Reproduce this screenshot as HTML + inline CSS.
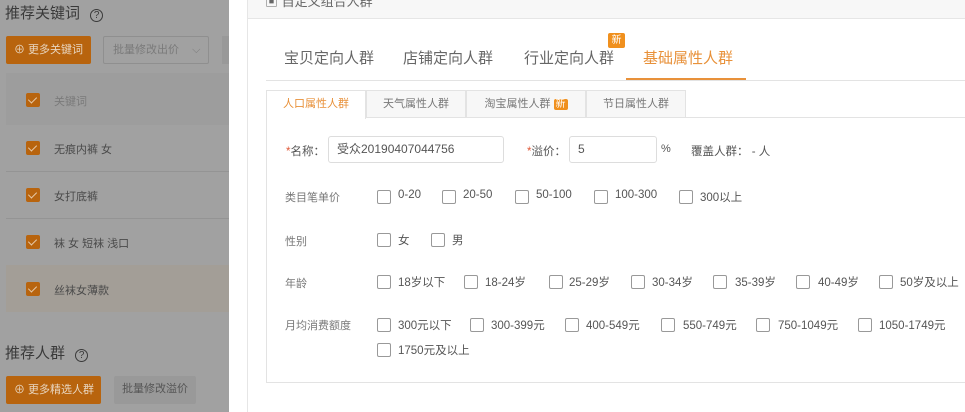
<!DOCTYPE html>
<html><head><meta charset="utf-8"><style>
*{margin:0;padding:0;box-sizing:border-box}
body{width:965px;height:412px;overflow:hidden;position:relative;background:#fff;font-family:"Liberation Sans","Noto Sans CJK SC",sans-serif;color:#555;font-size:12px}
.a{position:absolute;white-space:nowrap}
.l{left:0;top:0;width:229px;height:412px;background:#a1a1a1}
.ob{background:#b8640e;color:#e8d6c0;border-radius:2px;font-size:11px;line-height:28px;padding-left:8px}
.gb{background:#9c9c9c;border:1px solid #8f8f8f;color:#6a6a6a;border-radius:2px;font-size:11px}
.ck{width:14px;height:14px;border-radius:2px;background:#b8640e}
.ck:after{content:"";position:absolute;left:4px;top:2px;width:4px;height:7px;border:solid #e6c8a6;border-width:0 1.5px 1.5px 0;transform:rotate(45deg)}
.kt{font-size:11px;color:#4a4a4a}
.cb{width:14px;height:14px;border:1px solid #999;border-radius:2px;background:#fff}
.t{font-size:11.5px;color:#555}
.tab{top:90px;height:28px;border:1px solid #e3e3e3;background:#f7f7f7;font-size:11px;color:#777;text-align:center;line-height:26px}
</style></head><body>
<div class="a l"></div>
<div class="a" style="left:5px;top:2px;font-size:15px;color:#3a3a3a">推荐关键词 <span style="font-size:12px;border:1px solid #3a3a3a;border-radius:50%;display:inline-block;width:13px;height:13px;line-height:11px;text-align:center;font-size:10px;margin-left:6px">?</span></div>
<div class="a ob" style="left:6px;top:36px;width:85px">⊕ 更多关键词</div>
<div class="a gb" style="left:103px;top:36px;width:106px;height:28px;line-height:26px;padding-left:9px;background:#a1a1a1;color:#7a7a7a">批量修改出价 <span style="margin-left:10px">⌵</span></div>
<div class="a" style="left:222px;top:36px;width:7px;height:28px;background:#999"></div>
<div class="a" style="left:6px;top:73px;width:223px;height:52px;background:#9d9d9d"></div>
<div class="a" style="left:6px;top:171px;width:223px;height:1px;background:#949494"></div>
<div class="a" style="left:6px;top:218px;width:223px;height:1px;background:#949494"></div>
<div class="a" style="left:6px;top:265px;width:223px;height:47px;background:#a39e97"></div>
<div class="a ck" style="left:26px;top:93px"></div><div class="a kt" style="left:54px;top:93px;color:#7a7a7a">关键词</div>
<div class="a ck" style="left:26px;top:141px"></div><div class="a kt" style="left:54px;top:141px">无痕内裤 女</div>
<div class="a ck" style="left:26px;top:188px"></div><div class="a kt" style="left:54px;top:188px">女打底裤</div>
<div class="a ck" style="left:26px;top:235px"></div><div class="a kt" style="left:54px;top:235px">袜 女 短袜 浅口</div>
<div class="a ck" style="left:26px;top:282px"></div><div class="a kt" style="left:54px;top:282px">丝袜女薄款</div>
<div class="a" style="left:5px;top:342px;font-size:15px;color:#3a3a3a">推荐人群 <span style="border:1px solid #3a3a3a;border-radius:50%;display:inline-block;width:13px;height:13px;line-height:11px;text-align:center;font-size:10px;margin-left:6px">?</span></div>
<div class="a ob" style="left:6px;top:376px;width:95px">⊕ 更多精选人群</div>
<div class="a gb" style="left:114px;top:376px;width:82px;height:28px;line-height:26px;text-align:center;border:none;background:#999;color:#555">批量修改溢价</div>

<div class="a" style="left:229px;top:0;width:736px;height:412px;background:#fff"></div>
<div class="a" style="left:247px;top:0;width:718px;height:19px;background:#f7f7f7;border-bottom:1px solid #e6e6e6;border-left:1px solid #e6e6e6"></div>
<div class="a" style="left:247px;top:19px;width:1px;height:393px;background:#e6e6e6"></div>
<div class="a" style="left:265px;top:-9px;font-size:13px;color:#666">▣ 自定义组合人群</div>

<div class="a" style="left:266px;top:80px;width:699px;height:1px;background:#e3e3e3"></div>
<div class="a" style="left:626px;top:78px;width:120px;height:2px;background:#e8913a"></div>
<div class="a" style="left:284px;top:47px;font-size:15px;color:#666">宝贝定向人群</div>
<div class="a" style="left:403px;top:47px;font-size:15px;color:#666">店铺定向人群</div>
<div class="a" style="left:524px;top:47px;font-size:15px;color:#666">行业定向人群</div>
<div class="a" style="left:643px;top:47px;font-size:15px;color:#e8913a">基础属性人群</div>
<div class="a" style="left:608px;top:33px;width:17px;height:15px;background:#f0901e;border-radius:2px;color:#fff;font-size:10px;text-align:center;line-height:15px">新</div>

<div class="a" style="left:266px;top:117px;width:699px;height:266px;border:1px solid #e3e3e3;border-right:none"></div>
<div class="a tab" style="left:366px;width:100px">天气属性人群</div>
<div class="a tab" style="left:466px;width:120px">淘宝属性人群 <span style="background:#f0901e;color:#fff;padding:0 2px;border-radius:2px;font-size:10px">新</span></div>
<div class="a tab" style="left:586px;width:100px">节日属性人群</div>
<div class="a tab" style="left:266px;width:100px;background:#fff;color:#e8913a;height:29px;border-bottom:none">人口属性人群</div>

<div class="a t" style="left:286px;top:143px"><span style="color:#e05a3a">*</span>名称：</div>
<div class="a" style="left:328px;top:136px;width:176px;height:27px;border:1px solid #ddd;border-radius:3px;font-size:12px;line-height:25px;padding-left:8px;color:#555">受众20190407044756</div>
<div class="a t" style="left:527px;top:143px"><span style="color:#e05a3a">*</span>溢价：</div>
<div class="a" style="left:569px;top:136px;width:88px;height:27px;border:1px solid #ddd;border-radius:3px;line-height:25px;padding-left:8px">5</div>
<div class="a t" style="left:661px;top:143px;font-size:11px">%</div>
<div class="a t" style="left:691px;top:143px;color:#555">覆盖人群： -  人</div>

<div class="a t" style="left:285px;top:189px;font-size:11px;color:#777">类目笔单价</div>
<div class="a t" style="left:285px;top:233px;font-size:11px;color:#777">性别</div>
<div class="a t" style="left:285px;top:275px;font-size:11px;color:#777">年龄</div>
<div class="a t" style="left:285px;top:317px;font-size:11px;color:#777">月均消费额度</div>

<div class="a cb" style="left:377px;top:190px"></div><div class="a t" style="left:398px;top:189px">0-20</div>
<div class="a cb" style="left:442px;top:190px"></div><div class="a t" style="left:463px;top:189px">20-50</div>
<div class="a cb" style="left:515px;top:190px"></div><div class="a t" style="left:536px;top:189px">50-100</div>
<div class="a cb" style="left:594px;top:190px"></div><div class="a t" style="left:615px;top:189px">100-300</div>
<div class="a cb" style="left:679px;top:190px"></div><div class="a t" style="left:700px;top:189px">300以上</div>

<div class="a cb" style="left:377px;top:233px"></div><div class="a t" style="left:398px;top:232px">女</div>
<div class="a cb" style="left:431px;top:233px"></div><div class="a t" style="left:452px;top:232px">男</div>

<div class="a cb" style="left:377px;top:275px"></div><div class="a t" style="left:398px;top:274px">18岁以下</div>
<div class="a cb" style="left:464px;top:275px"></div><div class="a t" style="left:485px;top:274px">18-24岁</div>
<div class="a cb" style="left:549px;top:275px"></div><div class="a t" style="left:569px;top:274px">25-29岁</div>
<div class="a cb" style="left:631px;top:275px"></div><div class="a t" style="left:652px;top:274px">30-34岁</div>
<div class="a cb" style="left:713px;top:275px"></div><div class="a t" style="left:735px;top:274px">35-39岁</div>
<div class="a cb" style="left:796px;top:275px"></div><div class="a t" style="left:818px;top:274px">40-49岁</div>
<div class="a cb" style="left:879px;top:275px"></div><div class="a t" style="left:900px;top:274px">50岁及以上</div>

<div class="a cb" style="left:377px;top:318px"></div><div class="a t" style="left:398px;top:317px">300元以下</div>
<div class="a cb" style="left:470px;top:318px"></div><div class="a t" style="left:491px;top:317px">300-399元</div>
<div class="a cb" style="left:565px;top:318px"></div><div class="a t" style="left:586px;top:317px">400-549元</div>
<div class="a cb" style="left:661px;top:318px"></div><div class="a t" style="left:683px;top:317px">550-749元</div>
<div class="a cb" style="left:756px;top:318px"></div><div class="a t" style="left:778px;top:317px">750-1049元</div>
<div class="a cb" style="left:858px;top:318px"></div><div class="a t" style="left:879px;top:317px">1050-1749元</div>
<div class="a cb" style="left:377px;top:343px"></div><div class="a t" style="left:398px;top:342px">1750元及以上</div>
</body></html>
